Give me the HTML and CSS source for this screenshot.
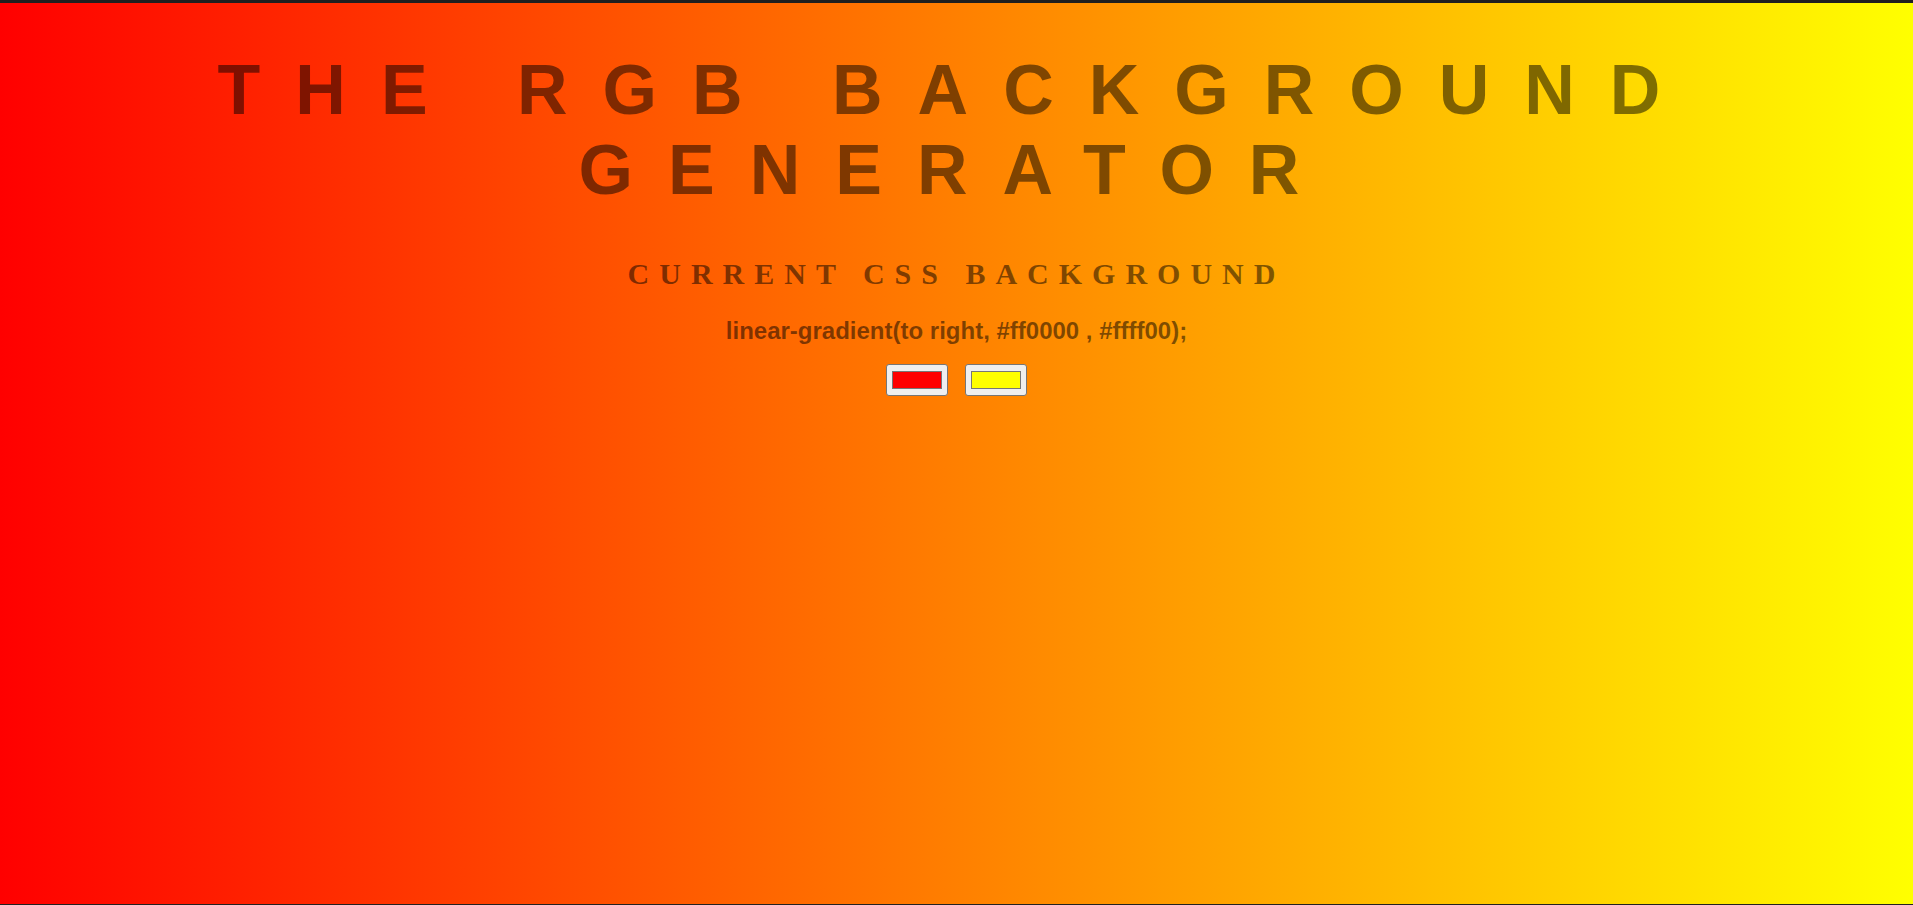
FILE: index.html
```html
<!DOCTYPE html>
<html lang="en">
<head>
<meta charset="utf-8">
<title>Gradient Background</title>
<link rel="stylesheet" href="styles.css">
</head>
<body>
<div class="topbar"></div>
<h1 class="title">The RGB Background Generator</h1>
<h3 class="subtitle">Current CSS Background</h3>
<p class="css-value">linear-gradient(to right, #ff0000 , #ffff00);</p>
<div class="pickers">
  <input class="color" type="color" name="color1" value="#ff0000">
  <input class="color" type="color" name="color2" value="#ffff00">
</div>
<div class="bottombar"></div>
</body>
</html>
```
FILE: styles.css
```css
html {
  background: linear-gradient(to right, #ff0000, #ffff00);
  min-height: 100%;
}
body {
  margin: 0;
  min-height: 905px;
  text-align: center;
  color: rgba(0, 0, 0, 0.5);
}
.topbar {
  height: 3px;
  background: #1f1f1f;
}
.title {
  margin: 46.5px 0 0;
  font-family: "Liberation Sans", Arial, sans-serif;
  font-weight: 700;
  font-size: 70px;
  line-height: 80px;
  letter-spacing: 35px;
  text-transform: uppercase;
}
.subtitle {
  margin: 47.5px 0 0;
  font-family: "Liberation Serif", "Times New Roman", serif;
  font-weight: 700;
  font-size: 30px;
  line-height: 34px;
  letter-spacing: 10px;
  text-transform: uppercase;
}
.css-value {
  margin: 25.7px 0 0;
  font-family: "Liberation Sans", Arial, sans-serif;
  font-weight: 700;
  font-size: 24px;
  line-height: 28px;
}
.pickers {
  margin-top: 19.6px;
  display: flex;
  justify-content: center;
  gap: 16.5px;
}
.color {
  -webkit-appearance: none;
  appearance: none;
  box-sizing: border-box;
  width: 62px;
  height: 32px;
  padding: 0;
  margin: 0;
  border: 1px solid #767676;
  border-radius: 3px;
  background-color: #efefef;
  cursor: pointer;
}
.color::-webkit-color-swatch-wrapper {
  padding: 6px 5px;
}
.color::-webkit-color-swatch {
  border: 1px solid #777777;
  border-radius: 0;
}
.bottombar {
  position: fixed;
  left: 0;
  right: 0;
  bottom: 0;
  height: 1px;
  background: #222222;
}
```
